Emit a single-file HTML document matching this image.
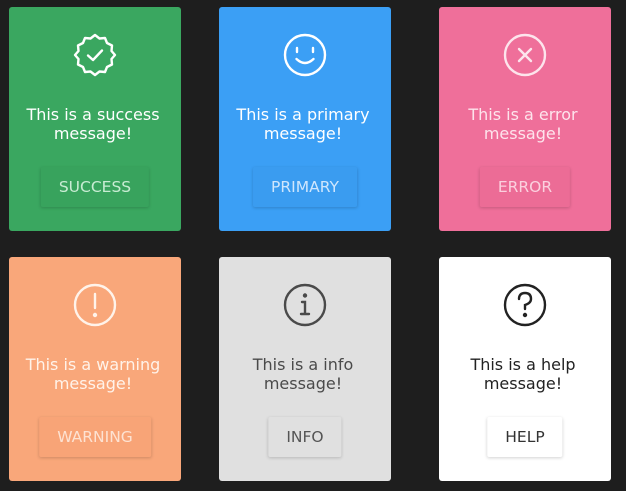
<!DOCTYPE html>
<html><head><style>
*{margin:0;padding:0;box-sizing:border-box}
body{width:626px;height:491px;background:#1e1e1e;position:relative;overflow:hidden;font-family:"DejaVu Sans","Liberation Sans",sans-serif}
.c{position:absolute;width:172px;height:224px;border-radius:3px;text-align:center}
.c svg{position:absolute;left:63px;top:25px;width:46px;height:46px}
.t{position:absolute;left:-7px;right:-3px;top:98px;font-size:16px;line-height:19px}
.b{position:absolute;top:160px;left:50%;transform:translateX(-50%);height:40px;line-height:40px;padding:0 18px;font-size:15.5px;border-radius:2px;white-space:nowrap;box-shadow:0 1px 3px rgba(0,0,0,.18)}
</style></head><body>

<div class="c" style="left:9px;top:7px;background:#3aa760;color:#fff">
<svg viewBox="0 0 46 46" fill="none" stroke="#fff" stroke-width="2.4" stroke-linejoin="round" stroke-linecap="round"><path d="M23 3 L27.5 6.5 L33 6 L35 11 L40 13.5 L39.5 19 L43 23 L39.5 27 L40 32.5 L35 35 L33 40 L27.5 39.5 L23 43 L18.5 39.5 L13 40 L11 35 L6 32.5 L6.5 27 L3 23 L6.5 19 L6 13.5 L11 11 L13 6 L18.5 6.5 Z"/><path d="M16 23.5 L21 28 L30 18.5"/></svg>
<div class="t">This is a success<br>message!</div>
<div class="b" style="background:#38a35d;color:#c8ecd3">SUCCESS</div></div>

<div class="c" style="left:219px;top:7px;background:#3b9ff5;color:#fff">
<svg viewBox="0 0 46 46" fill="none" stroke="#fff" stroke-width="2.4" stroke-linecap="round"><circle cx="23" cy="23" r="20"/><path d="M15 16v4M31 16v4"/><path d="M14.5 27 Q23 35 31.5 27"/></svg>
<div class="t">This is a primary<br>message!</div>
<div class="b" style="background:#3a9cf0;color:#cfe6fd">PRIMARY</div></div>

<div class="c" style="left:439px;top:7px;background:#ef6f9a;color:#fde4ec">
<svg viewBox="0 0 46 46" fill="none" stroke="#fde4ec" stroke-width="2.4" stroke-linecap="round"><circle cx="23" cy="23" r="20"/><path d="M17 17 L29 29 M29 17 L17 29"/></svg>
<div class="t">This is a error<br>message!</div>
<div class="b" style="background:#ec6c96;color:#fbd0de">ERROR</div></div>

<div class="c" style="left:9px;top:257px;background:#f9a77a;color:#fff3ea">
<svg viewBox="0 0 46 46" fill="none" stroke="#fff3ea" stroke-width="2.4" stroke-linecap="round"><circle cx="23" cy="23" r="20"/><path d="M23 12 V26"/><circle cx="23" cy="33" r="1" fill="#fff3ea"/></svg>
<div class="t">This is a warning<br>message!</div>
<div class="b" style="background:#f8a477;color:#fde2d2">WARNING</div></div>

<div class="c" style="left:219px;top:257px;background:#e0e0e0;color:#4a4a4a">
<svg viewBox="0 0 46 46" fill="none" stroke="#4a4a4a" stroke-width="2.4" stroke-linecap="round"><circle cx="23" cy="23" r="20"/><circle cx="23" cy="13.5" r="1" fill="#4a4a4a"/><path d="M20 20 H23 V32 M19 32 H27"/></svg>
<div class="t">This is a info<br>message!</div>
<div class="b" style="background:#e0e0e0;color:#555">INFO</div></div>

<div class="c" style="left:439px;top:257px;background:#fff;color:#222">
<svg viewBox="0 0 46 46" fill="none" stroke="#222" stroke-width="2.4" stroke-linecap="round"><circle cx="23" cy="23" r="20"/><path d="M17 17 Q17 11 23 11 Q29 11 29 17 Q29 21 23 23 V27"/><circle cx="23" cy="33" r="1" fill="#222"/></svg>
<div class="t">This is a help<br>message!</div>
<div class="b" style="background:#fff;color:#333">HELP</div></div>

</body></html>
